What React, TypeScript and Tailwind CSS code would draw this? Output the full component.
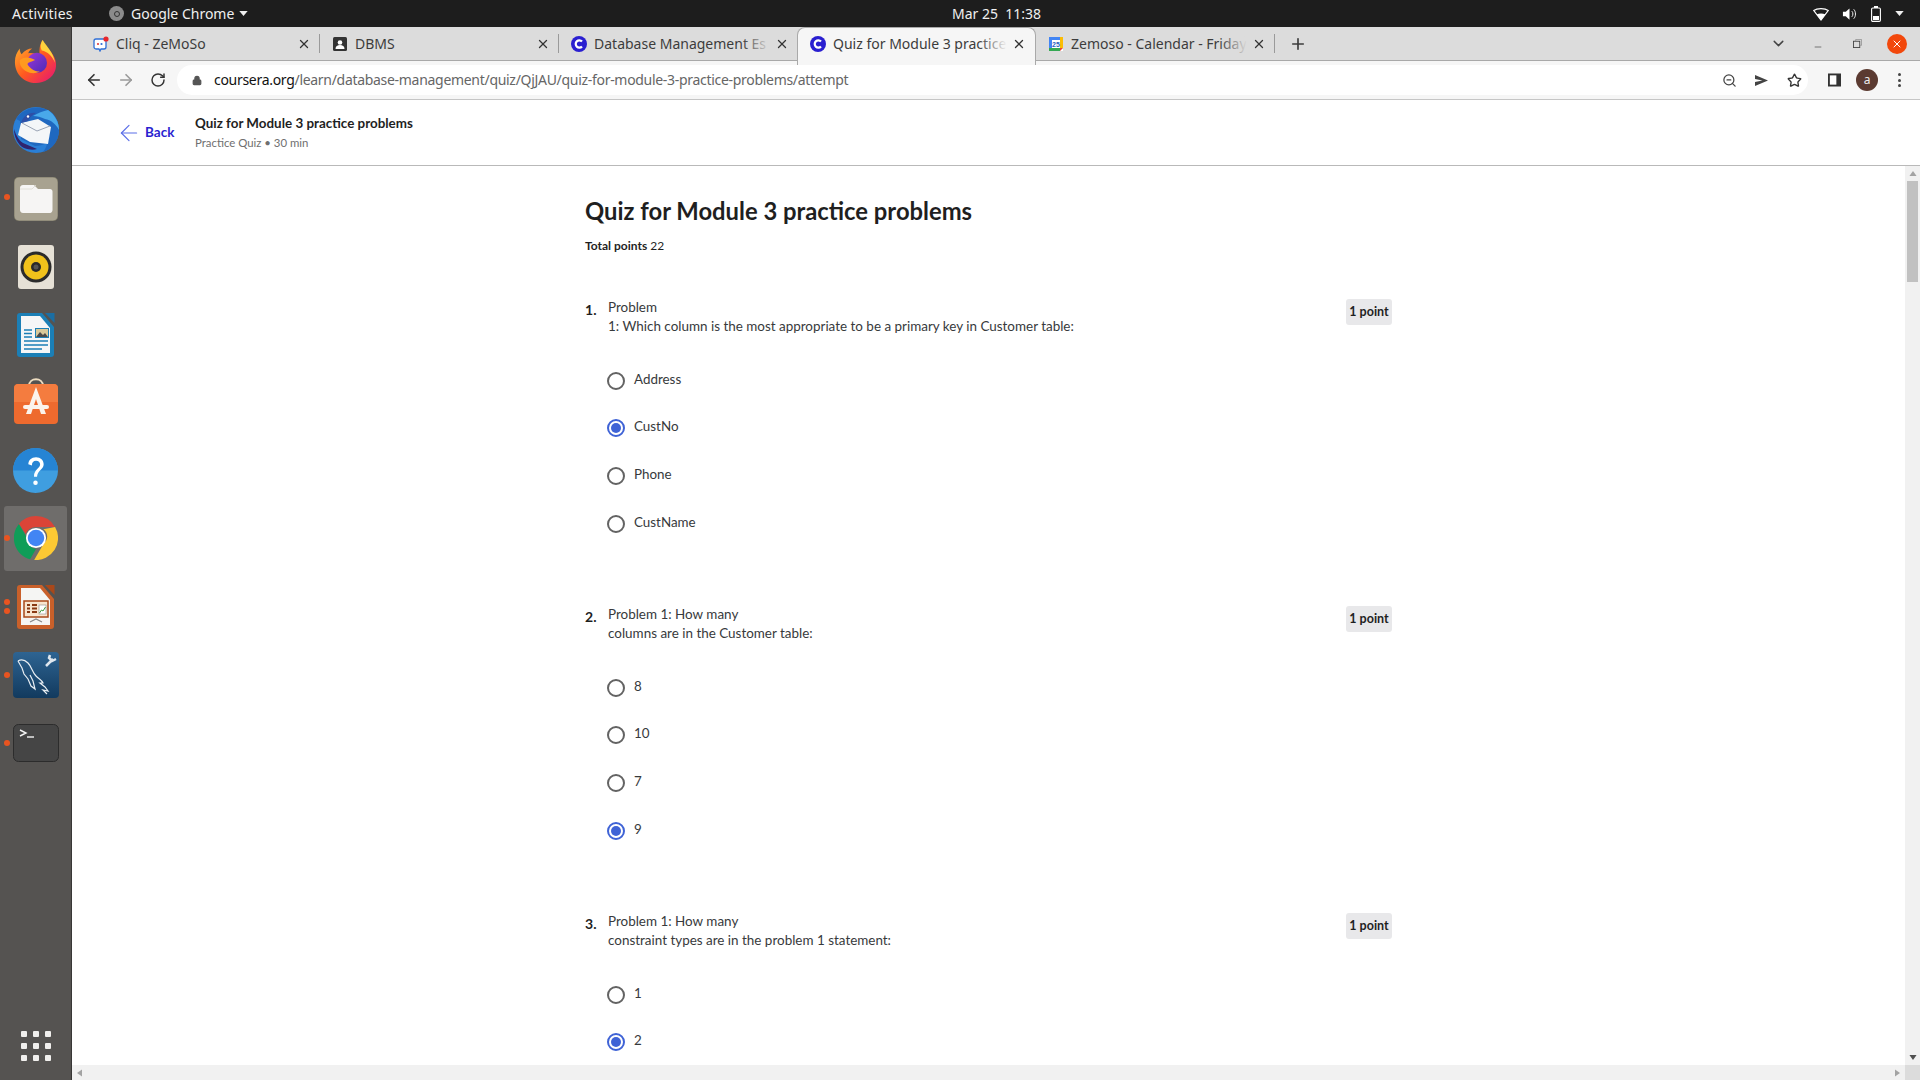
import React from "react";
import { ArrowLeft, ArrowRight, RotateCw, Lock, ZoomOut, Star, X, Plus, ChevronDown, Minus } from "lucide-react";

const ubuntu = "font-['Noto_Sans','Open_Sans',sans-serif]";
const source = "font-['Lato','Open_Sans',sans-serif]";

function Firefox() {
  return (
    <svg viewBox="0 0 48 48" className="w-[46px] h-[46px]">
      <defs>
        <linearGradient id="ff1" x1="0" y1="0" x2="1" y2="1">
          <stop offset="0" stopColor="#ffbd2e" />
          <stop offset="0.5" stopColor="#ff5a1f" />
          <stop offset="1" stopColor="#e5107a" />
        </linearGradient>
        <linearGradient id="ff2" x1="0" y1="0" x2="1" y2="1">
          <stop offset="0" stopColor="#9b37d6" />
          <stop offset="1" stopColor="#4a2bb8" />
        </linearGradient>
      </defs>
      <path d="M31 2c1 6 5 8 9 13 5 6 6 13 4 19-3 8-11 13-20 13C12 47 2 38 2 25c0-6 2-10 5-14 0 3 1 5 2 6 3-4 7-6 11-6-3 2-4 4-4 5 5-1 9 1 12 3-1-7 0-13 3-17z" fill="url(#ff1)" />
      <path d="M31 2c4 7 11 12 13 24-3-7-8-12-14-13-2-4-1-8 1-11z" fill="#ffd23d" />
      <circle cx="25" cy="26" r="10.5" fill="url(#ff2)" />
      <path d="M7 23c5-4 11-3 16 0-4 2-7 2-8 4 2 4 7 8 13 8-7 4-16 1-20-6-1-2-1-4-1-6z" fill="#ff9a1f" />
    </svg>
  );
}
function Thunderbird() {
  return (
    <svg viewBox="0 0 48 48" className="w-[48px] h-[48px]">
      <circle cx="24" cy="25" r="23" fill="#2a7fd6" />
      <path d="M4 14C10 4 24-1 36 5c8 4 11 13 11 20 0 12-8 20-16 22 3-4 4-7 4-9-4 2-8 3-12 3L9 34 8 16z" fill="#1f68c0" />
      <path d="M36 5c7 5 11 12 11 20-3-6-8-10-14-11-4-2-8-3-12-3 5-3 10-5 15-6z" fill="#49a9ea" />
      <path d="M9 18l17-4 13 8-3 17-18-2-12-7z" fill="#f4f6f8" />
      <path d="M10 18l15 8 13-5" fill="none" stroke="#9aa4b5" strokeWidth="1" />
      <path d="M2 24c0 8 4 16 10 19 5 2 10 2 13 1l-14-6c-4-2-7-8-9-14z" fill="#30246e" />
      <path d="M9 18c2-7 8-11 15-10-4 2-7 5-8 8z" fill="#2f4fa6" />
      <circle cx="16" cy="11.5" r="1.2" fill="#fff" />
    </svg>
  );
}
function Files() {
  return (
    <svg viewBox="0 0 44 44" className="w-[44px] h-[44px] translate-y-[2px]">
      <rect x="0" y="0" width="44" height="44" rx="5" fill="#a8a290" stroke="#6c6858" strokeWidth="0.7" />
      <path d="M6 11c0-1.600 1-3 3-3h11l4 4h12c1.500 0 2.500 1 2.500 2.500V33c0 1.500-1 3-2.500 3H9c-2 0-3-1.500-3-3z" fill="#f6f5f4" />
      <path d="M6 12h12l4-4" fill="none" stroke="#dddad2" strokeWidth="0.8" />
    </svg>
  );
}
function Rhythmbox() {
  return (
    <svg viewBox="0 0 36 44" className="w-[36px] h-[44px] translate-y-[1px]">
      <rect width="36" height="44" rx="3" fill="#e6e1d6" />
      <circle cx="18" cy="22" r="15.500" fill="#2b2b2b" />
      <circle cx="18" cy="22" r="12.500" fill="#f1c21b" />
      <circle cx="18" cy="22" r="5" fill="#2a2a2a" />
      <circle cx="18" cy="22" r="2.500" fill="#555" />
    </svg>
  );
}
function Writer() {
  return (
    <svg viewBox="0 0 38 46" className="w-[38px] h-[46px] translate-y-[1px]">
      <path d="M28 1h9.500v10z" fill="#1b6ea3" />
      <path d="M3 1h22l12 14v27c0 2-1 3-3 3H3c-2 0-3-1-3-3V4c0-2 1-3 3-3z" fill="#1b7fb6" />
      <path d="M4 4h19l10 12v25H4z" fill="#f5f6f7" />
      <path d="M7 18h8M7 21.500h8M7 25h8M7 29h24M7 33h24M7 37h18" stroke="#1b7fb6" strokeWidth="1.600" />
      <rect x="18" y="16" width="14" height="10" fill="#1b7fb6" />
      <rect x="19" y="17" width="12" height="8" fill="#d9c99a" />
      <path d="M19 25l4-5 3 3 2-2 3 4z" fill="#4a4a4a" />
    </svg>
  );
}
function Software() {
  return (
    <svg viewBox="0 0 44 48" className="w-[44px] h-[48px]">
      <path d="M15 8c0-9 14-9 14 0" fill="none" stroke="#ecdcc0" strokeWidth="2" />
      <rect x="0" y="6" width="44" height="40" rx="4" fill="#ee6a2e" />
      <path d="M0 10c0-2 2-4 4-4h36c2 0 4 2 4 4v14H0z" fill="#f47c3f" />
      <path d="M22 9l-10 27h5l5-15 5 15h5z" fill="#fbf3ec" />
      <rect x="9" y="27" width="26" height="4" rx="2" fill="#fbf3ec" />
    </svg>
  );
}
function Help() {
  return (
    <svg viewBox="0 0 44 44" className="w-[45px] h-[45px]">
      <circle cx="22" cy="22" r="22" fill="#3f9ee0" />
      <path d="M0 22a22 22 0 0 1 44 0z" fill="#2684d4" />
      <path d="M15 16c0-4 3-7 7.500-7S30 12 30 16c0 5-6 6-6.500 12h-3c0-7 6-8 6-12 0-2-1.500-3.500-4-3.500S18.500 14 18.500 17z" fill="#fff" />
      <circle cx="22" cy="34" r="2.200" fill="#fff" />
    </svg>
  );
}
function ChromeLogo({ size = 44 }: { size?: number }) {
  return (
    <svg viewBox="0 0 48 48" width={size} height={size}>
      <path d="M24 0a24 24 0 0 1 20.800 12H24a12 12 0 0 0-11.200 7.600L5.400 8.700A24 24 0 0 1 24 0z" fill="#db4437" />
      <path d="M5.400 8.700l10.400 18A9.500 9.500 0 0 0 24 36l-6.500 11.200A24 24 0 0 1 5.400 8.700z" fill="#0f9d58" />
      <path d="M44.800 12A24 24 0 0 1 22 48l10.400-18A9.500 9.500 0 0 0 32 14.500z" fill="#fcc934" />
      <circle cx="24" cy="24" r="11" fill="#fff" />
      <circle cx="24" cy="24" r="9" fill="#4285f4" />
    </svg>
  );
}
function Impress() {
  return (
    <svg viewBox="0 0 38 46" className="w-[38px] h-[46px]">
      <path d="M28 1h9.500v10z" fill="#a9481a" />
      <path d="M3 1h22l12 14v27c0 2-1 3-3 3H3c-2 0-3-1-3-3V4c0-2 1-3 3-3z" fill="#c9602a" />
      <path d="M4 4h19l10 12v25H4z" fill="#f5f5f3" />
      <rect x="7" y="17" width="24" height="16" fill="#f8e5cf" stroke="#a9481a" strokeWidth="1.500" />
      <path d="M10 21h3M10 24.500h3M10 28h3M15 21h5M15 24.500h5M15 28h5" stroke="#8a3a14" strokeWidth="2" />
      <rect x="22" y="21" width="7" height="9" fill="#fff" stroke="#777" strokeWidth="0.5" />
      <path d="M22.500 29l2-3 1.500 1 2.500-4" stroke="#3f9a3f" fill="none" strokeWidth="1" />
      <path d="M13 38l6-3 6 3" stroke="#888" fill="none" strokeWidth="1.200" />
    </svg>
  );
}
function Mysql() {
  return (
    <svg viewBox="0 0 46 46" className="w-[46px] h-[46px]">
      <defs>
        <linearGradient id="my" x1="0" y1="0" x2="0" y2="1">
          <stop offset="0" stopColor="#2e6492" />
          <stop offset="1" stopColor="#123a5e" />
        </linearGradient>
      </defs>
      <rect width="46" height="46" rx="4" fill="url(#my)" />
      <path d="M5 9c3-2 7-1 10 2 4 4 4 9 8 13 3 3 6 4 7 7l-3 0 5 4 3 4-5-1 4 4" fill="none" stroke="#e8eef3" strokeWidth="1.200" />
      <path d="M5 9l4 7 2 6 4 5 3 7 4 3-2-8-3-6" fill="none" stroke="#e8eef3" strokeWidth="1.200" />
      <path d="M33 14l7-7M37 3l-1 3 3 3 4-2" fill="none" stroke="#dfe7ee" strokeWidth="2.500" />
    </svg>
  );
}
function Terminal() {
  return (
    <svg viewBox="0 0 46 38" className="w-[46px] h-[38px]">
      <rect x="0.500" y="0.500" width="45" height="37" rx="5" fill="#454545" stroke="#2c2c2c" />
      <path d="M7 6l6 3-6 3" fill="none" stroke="#f4f4f4" strokeWidth="1.400" />
      <path d="M14 13h7" stroke="#f4f4f4" strokeWidth="1.400" />
    </svg>
  );
}

function DockItem({ children, dots = 0, active = false }: { children: React.ReactNode; dots?: number; active?: boolean }) {
  return (
    <div className="relative h-[68.2px] flex items-center justify-center shrink-0">
      {active && <div className="absolute left-1 right-1 top-[2px] bottom-[2px] bg-[#6f6d6b] rounded-[3px]" />}
      <div className="relative flex items-center justify-center">{children}</div>
      {dots > 0 && (
        <div className="absolute left-[4px] top-0 bottom-0 flex flex-col justify-center gap-[3px]">
          {Array.from({ length: dots }).map((_, i) => (
            <span key={i} className="block w-[6px] h-[6px] rounded-full bg-[#e95420]" />
          ))}
        </div>
      )}
    </div>
  );
}

function Dock() {
  return (
    <div className="w-[72px] shrink-0 bg-[#555351] border-r border-[#383736] flex flex-col">
      <DockItem><Firefox /></DockItem>
      <DockItem><Thunderbird /></DockItem>
      <DockItem dots={1}><Files /></DockItem>
      <DockItem><Rhythmbox /></DockItem>
      <DockItem><Writer /></DockItem>
      <DockItem><Software /></DockItem>
      <DockItem><Help /></DockItem>
      <DockItem dots={1} active><ChromeLogo /></DockItem>
      <DockItem dots={2}><Impress /></DockItem>
      <DockItem dots={1}><Mysql /></DockItem>
      <DockItem dots={1}><Terminal /></DockItem>
      <div className="mt-auto mb-[19px] grid grid-cols-3 gap-[6px] self-center">
        {Array.from({ length: 9 }).map((_, i) => (
          <span key={i} className="block w-[6px] h-[6px] rounded-[1px] bg-[#f1f0ee]" />
        ))}
      </div>
    </div>
  );
}

function TopBar() {
  return (
    <div className={`h-[27px] shrink-0 bg-[#1d1d1d] text-[#f0f0f0] text-[14px] flex items-center relative ${ubuntu}`}>
      <span className="ml-[12px] w-[62px] tracking-[0.25px] whitespace-nowrap">Activities</span>
      <span className="ml-[35px] w-[15px] h-[15px] rounded-full bg-[#8b8b8b] flex items-center justify-center">
        <span className="w-[6px] h-[6px] rounded-full border border-[#333]" />
      </span>
      <span className="ml-[7px]">Google Chrome</span>
      <svg viewBox="0 0 10 6" className="w-[9px] h-[5px] ml-[5px]"><path d="M0 0h10L5 6z" fill="#f0f0f0" /></svg>
      <span className="absolute left-[952px] top-[3px] text-[14px] whitespace-pre">Mar 25  11:38</span>
      <div className="ml-auto mr-[16px] flex items-center">
        <svg viewBox="0 0 16 14" className="w-[16px] h-[14px]"><path d="M0.800 3.500C4 1 12 1 15.200 3.500L8 13z" fill="none" stroke="#fff" strokeWidth="1.200" /><path d="M3.500 7.500C6 6 10 6 12.500 7.500L8 13z" fill="#fff" /></svg>
        <svg viewBox="0 0 16 14" className="w-[15px] h-[14px] ml-[13px]"><path d="M1 4.500h3L8 1v12L4 9.500H1z" fill="#fff" /><path d="M10.500 4c1.500 1.500 1.500 4.500 0 6M12.500 2c2.500 2.500 2.500 7.500 0 10" fill="none" stroke="#fff" strokeWidth="1" /></svg>
        <svg viewBox="0 0 10 16" className="w-[10px] h-[16px] ml-[14px]"><rect x="0.600" y="2" width="8.800" height="13.400" rx="1.200" fill="none" stroke="#fff" strokeWidth="1.100" /><rect x="3" y="0" width="4" height="2" fill="#fff" /><rect x="2" y="10" width="6" height="4" fill="#fff" /></svg>
        <svg viewBox="0 0 10 6" className="w-[9px] h-[5px] ml-[14px]"><path d="M0 0h10L5 6z" fill="#f0f0f0" /></svg>
      </div>
    </div>
  );
}

function CourseraIcon() {
  return (
    <svg viewBox="0 0 16 16" className="w-[16px] h-[16px] shrink-0">
      <circle cx="8" cy="8" r="8" fill="#2a1fd0" />
      <path d="M11 5.600A3.600 3.600 0 1 0 11 10.400" fill="none" stroke="#fff" strokeWidth="2.200" />
    </svg>
  );
}
function CliqIcon() {
  return (
    <svg viewBox="0 0 16 16" className="w-[16px] h-[16px] shrink-0">
      <path d="M3 3h8a2 2 0 0 1 2 2v6a2 2 0 0 1-2 2H8l-1 2-1-2H3a2 2 0 0 1-2-2V5a2 2 0 0 1 2-2z" fill="#fff" stroke="#2f6fd6" strokeWidth="1.300" />
      <circle cx="5" cy="8" r="1.100" fill="#e23b3b" />
      <circle cx="8.500" cy="8" r="1.100" fill="#2f6fd6" />
      <circle cx="13" cy="3" r="2.600" fill="#e8262b" />
    </svg>
  );
}
function DbmsIcon() {
  return (
    <svg viewBox="0 0 16 16" className="w-[16px] h-[16px] shrink-0">
      <rect x="1" y="1" width="14" height="14" rx="1.500" fill="#333" />
      <circle cx="8" cy="6.500" r="2.300" fill="#fff" />
      <path d="M3.500 13c0-3 2-4 4.500-4s4.500 1 4.500 4z" fill="#fff" />
    </svg>
  );
}
function CalendarIcon() {
  return (
    <svg viewBox="0 0 16 16" className="w-[16px] h-[16px] shrink-0">
      <rect x="1" y="1" width="14" height="14" fill="#fff" />
      <path d="M1 1h11v3H1z" fill="#4285f4" />
      <path d="M1 1h3v11H1z" fill="#4285f4" />
      <path d="M12 1h3v11h-3z" fill="#fbbc04" />
      <path d="M1 12h11v3H1z" fill="#34a853" />
      <path d="M12 12h3l-3 3z" fill="#ea4335" />
      <text x="8" y="10.500" fontSize="7" fontWeight="700" textAnchor="middle" fill="#2a5fc0" fontFamily="Liberation Sans, sans-serif">25</text>
    </svg>
  );
}

function Tab({ icon, title, active = false, fade = false, sep = true }: { icon: React.ReactNode; title: string; active?: boolean; fade?: boolean; sep?: boolean }) {
  return (
    <div className={`relative w-[239px] shrink-0 flex items-center pl-[12px] pr-[8px] ${active ? "h-[38px] pb-[6px] bg-[#f6f6f6] rounded-t-[8px] border-x border-t border-[#a9a9a9] z-10 -ml-[1px]" : "h-[33px]"}`}>
      {icon}
      <div className="relative ml-[7px] flex-1 min-w-0 overflow-hidden whitespace-nowrap text-[14px] text-[#3c3c3c]">
        {title}
        {fade && <div className={`absolute right-0 top-0 bottom-0 w-[28px] bg-gradient-to-r from-transparent ${active ? "to-[#f6f6f6]" : "to-[#dcdcdc]"}`} />}
      </div>
      <X className="w-[14px] h-[14px] ml-[5px] mr-[1px] shrink-0 text-[#333]" strokeWidth={2.2} />
      {sep && !active && <span className="absolute right-0 top-[7px] h-[19px] w-px bg-[#9a9a9a]" />}
    </div>
  );
}

function TabStrip() {
  return (
    <div className={`h-[34px] shrink-0 bg-[#dcdcdc] border-b border-[#a9a9a9] flex items-start pl-[9px] ${ubuntu}`}>
      <Tab icon={<CliqIcon />} title="Cliq - ZeMoSo" />
      <Tab icon={<DbmsIcon />} title="DBMS" />
      <Tab icon={<CourseraIcon />} title="Database Management Es" fade sep={false} />
      <Tab icon={<CourseraIcon />} title="Quiz for Module 3 practice" active fade />
      <Tab icon={<CalendarIcon />} title="Zemoso - Calendar - Friday" fade />
      <Plus className="w-[18px] h-[18px] ml-[14px] mt-[8px] text-[#3c3c3c]" strokeWidth={2.2} />
      <div className="ml-auto flex items-center h-[33px] text-[#444]">
        <ChevronDown className="w-[17px] h-[17px]" strokeWidth={2} />
        <Minus className="w-[10px] h-[10px] ml-[26px] mt-[7px]" strokeWidth={1.6} />
        <svg viewBox="0 0 10 10" className="w-[9px] h-[9px] ml-[30px]"><rect x="0.500" y="2.500" width="7" height="7" fill="none" stroke="#444" strokeWidth="1" /><path d="M3 2.500V0.500h6.500V7H8" fill="none" stroke="#888" strokeWidth="0.800" /></svg>
        <span className="ml-[25px] mr-[13px] w-[20px] h-[20px] rounded-full bg-[#f2480c] flex items-center justify-center">
          <X className="w-[12px] h-[12px] text-white" strokeWidth={2} />
        </span>
      </div>
    </div>
  );
}

function Toolbar() {
  return (
    <div className={`h-[39px] shrink-0 bg-[#f6f6f6] border-b border-[#c6c6c6] flex items-center ${ubuntu}`}>
      <ArrowLeft className="w-[18px] h-[18px] ml-[13px] text-[#333]" strokeWidth={2.2} />
      <ArrowRight className="w-[18px] h-[18px] ml-[14px] text-[#9a9a9a]" strokeWidth={2.2} />
      <RotateCw className="w-[16px] h-[16px] ml-[15px] text-[#333]" strokeWidth={2.2} />
      <div className="ml-[11px] h-[30px] w-[1631px] bg-white rounded-full flex items-center">
        <Lock className="w-[10px] h-[11px] ml-[15px] text-[#555]" strokeWidth={3} fill="#555" />
        <span className="ml-[12px] text-[14px] leading-[19px] -mt-[1px] tracking-[-0.3px] text-[#111] whitespace-nowrap">
          coursera.org<span className="text-[#666]">/learn/database-management/quiz/QjJAU/quiz-for-module-3-practice-problems/attempt</span>
        </span>
        <div className="ml-auto flex items-center">
          <ZoomOut className="w-[15px] h-[15px] text-[#444]" strokeWidth={2} />
          <svg viewBox="0 0 16 14" className="w-[15px] h-[13px] ml-[17px]"><path d="M1 1l14 6-14 6 0-4.500 8-1.500-8-1.500z" fill="#444" /></svg>
          <Star className="w-[15px] h-[15px] ml-[18px] mr-[6px] text-[#333]" strokeWidth={2.2} />
        </div>
      </div>
      <svg viewBox="0 0 14 14" className="w-[13px] h-[14px] ml-[20px]"><path d="M0 0h14v14H0z" fill="#333" /><path d="M2 2h7v10H2z" fill="#fff" /></svg>
      <span className="ml-[15px] w-[22px] h-[22px] rounded-full bg-[#5b3a31] text-[#eee] text-[12px] flex items-center justify-center">a</span>
      <span className="ml-[20px] flex flex-col gap-[2.500px]">
        <span className="block w-[3px] h-[3px] rounded-full bg-[#444]" />
        <span className="block w-[3px] h-[3px] rounded-full bg-[#444]" />
        <span className="block w-[3px] h-[3px] rounded-full bg-[#444]" />
      </span>
    </div>
  );
}

function PageHeader() {
  return (
    <div className={`h-[66px] shrink-0 bg-white border-b border-[#b9b9b9] flex items-center ${source}`}>
      <ArrowLeft className="ml-[44px] w-[26px] h-[26px] text-[#5b6ee8]" strokeWidth={1.1} />
      <span className="ml-[3px] w-[50px] text-[13.5px] font-bold text-[#2a1fd0]">Back</span>
      <div className="flex flex-col -mt-[1px]">
        <span className="text-[13.4px] font-bold leading-[20px] text-[#1f1f1f]">Quiz for Module 3 practice problems</span>
        <span className="text-[11.4px] leading-[19px] text-[#6f6f6f]">Practice Quiz • 30 min</span>
      </div>
    </div>
  );
}

function Radio({ label, checked = false }: { label: string; checked?: boolean }) {
  return (
    <div className="h-[47.800px] flex items-start -ml-[1px]">
      <span className={`mt-[6px] w-[18px] h-[18px] rounded-full border-2 flex items-center justify-center shrink-0 ${checked ? "border-[#3f63d6]" : "border-[#636363]"}`}>
        {checked && <span className="block w-[10px] h-[10px] rounded-full bg-[#3f63d6]" />}
      </span>
      <span className="ml-[9px] text-[13.4px] leading-[18px] text-[#373a3c] mt-[4px]">{label}</span>
    </div>
  );
}

function Question({ n, lines, options }: { n: number; lines: string[]; options: { label: string; checked?: boolean }[] }) {
  return (
    <div className="h-[307px] flex items-start w-[807px]">
      <span className="w-[23px] mt-[4px] text-[14px] leading-[18px] font-bold text-[#1f1f1f]">{n}.</span>
      <div className="flex-1 min-w-0">
        <div className="text-[13.45px] leading-[19px] text-[#373a3c] h-[39px] pt-[1px]">
          {lines.map((l) => (
            <div key={l}>{l}</div>
          ))}
        </div>
        <div className="mt-[29.500px]">
          {options.map((o) => (
            <Radio key={o.label} label={o.label} checked={o.checked} />
          ))}
        </div>
      </div>
      <span className="h-[26px] w-[46px] rounded-[3px] bg-[#e8e8ea] flex items-center justify-center text-[12.5px] font-bold text-[#1f1f1f] mt-[2px] whitespace-nowrap">1 point</span>
    </div>
  );
}

function Triangle({ dir, cls }: { dir: "up" | "down" | "left" | "right"; cls: string }) {
  const d = { up: "M0 7h10L5 0z", down: "M0 0h10L5 7z", left: "M7 0v10L0 5z", right: "M0 0v10l7-5z" }[dir];
  return (
    <svg viewBox={dir === "up" || dir === "down" ? "0 0 10 7" : "0 0 7 10"} className={dir === "up" || dir === "down" ? "w-[8px] h-[5px]" : "w-[5px] h-[8px]"}>
      <path d={d} className={cls} />
    </svg>
  );
}

function Content() {
  return (
    <div className="flex-1 min-h-0 flex">
      <div className={`flex-1 min-w-0 overflow-hidden bg-white pl-[513px] ${source}`}>
        <h1 className="mt-[27px] text-[23.8px] leading-[36px] font-bold text-[#1f1f1f]">Quiz for Module 3 practice problems</h1>
        <p className="mt-[8px] text-[12px] leading-[18px] text-[#1f1f1f]"><span className="font-bold">Total points</span> 22</p>
        <div className="mt-[42px]">
          <Question n={1} lines={["Problem", "1: Which column is the most appropriate to be a primary key in Customer table:"]} options={[{ label: "Address" }, { label: "CustNo", checked: true }, { label: "Phone" }, { label: "CustName" }]} />
          <Question n={2} lines={["Problem 1: How many", "columns are in the Customer table:"]} options={[{ label: "8" }, { label: "10" }, { label: "7" }, { label: "9", checked: true }]} />
          <Question n={3} lines={["Problem 1: How many", "constraint types are in the problem 1 statement:"]} options={[{ label: "1" }, { label: "2", checked: true }]} />
        </div>
      </div>
      <div className="w-[15px] shrink-0 bg-[#f1f1f1] flex flex-col items-center">
        <div className="h-[15px] flex items-center justify-center"><Triangle dir="up" cls="fill-[#a3a3a3]" /></div>
        <div className="w-[11px] h-[101px] bg-[#c1c1c1]" />
        <div className="mt-auto h-[15px] flex items-center justify-center"><Triangle dir="down" cls="fill-[#505050]" /></div>
      </div>
    </div>
  );
}

function HScrollbar() {
  return (
    <div className="h-[15px] shrink-0 flex bg-[#f1f1f1]">
      <div className="flex-1 flex items-center justify-between px-[5px]">
        <Triangle dir="left" cls="fill-[#a3a3a3]" />
        <Triangle dir="right" cls="fill-[#a3a3a3]" />
      </div>
      <div className="w-[15px] bg-[#dcdcdc]" />
    </div>
  );
}

export default function App() {
  return (
    <div className="w-[1920px] h-[1080px] flex flex-col overflow-hidden bg-white">
      <TopBar />
      <div className="flex-1 min-h-0 flex">
        <Dock />
        <div className="flex-1 min-w-0 flex flex-col">
          <TabStrip />
          <Toolbar />
          <PageHeader />
          <Content />
          <HScrollbar />
        </div>
      </div>
    </div>
  );
}
